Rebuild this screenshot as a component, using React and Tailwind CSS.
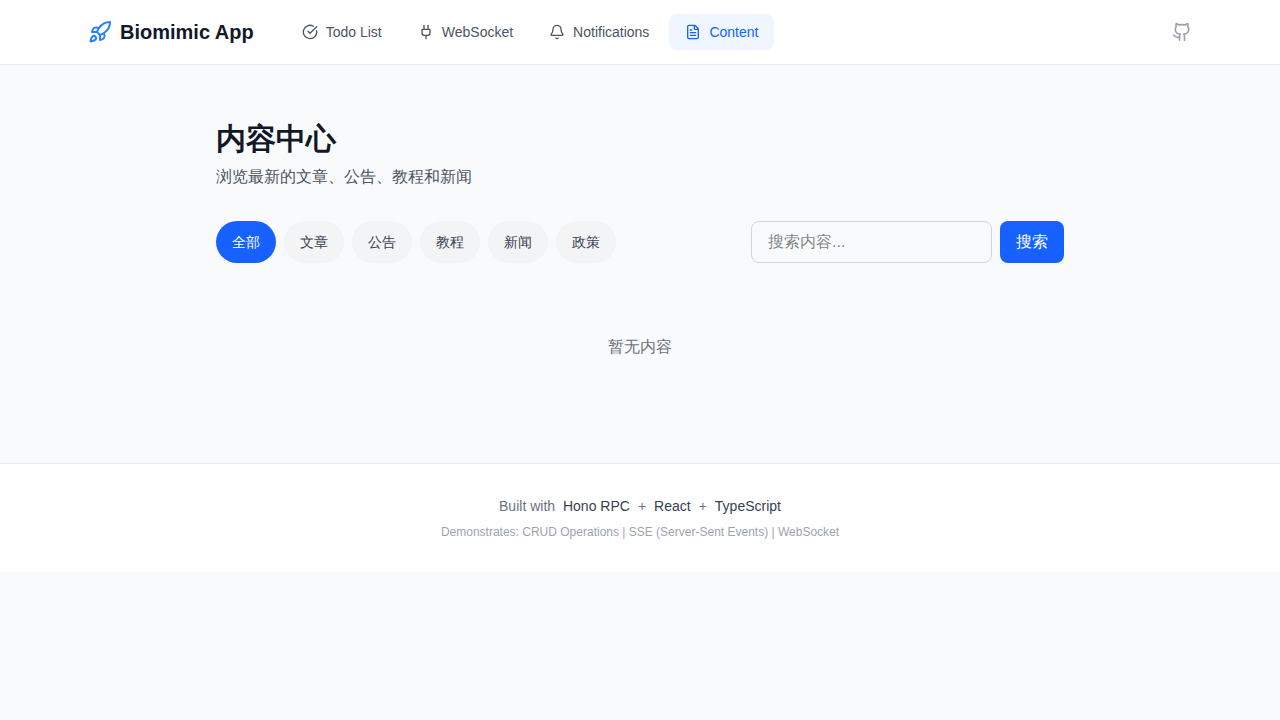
import { Rocket, CircleCheckBig, Plug, Bell, FileText, Github } from 'lucide-react'

const links = [
  { label: 'Todo List', icon: CircleCheckBig },
  { label: 'WebSocket', icon: Plug },
  { label: 'Notifications', icon: Bell },
  { label: 'Content', icon: FileText, active: true },
]

const categorias = ['全部', '文章', '公告', '教程', '新闻', '政策']

const fonte = 'font-["Liberation_Sans",sans-serif]'

export default function App() {
  return (
    <div className={`min-h-[720px] bg-[#f9fafb] ${fonte}`}>
      <header className="h-[65px] bg-white border-b border-[#e5e7eb] px-[88px] flex items-center justify-between">
        <div className="flex items-center">
          <div className="flex items-center gap-2 mr-8">
            <Rocket size={24} className="text-[#2b7fff]" />
            <span className="text-xl font-bold text-[#111827]">Biomimic App</span>
          </div>
          <nav className="flex items-center gap-1">
            {links.map(({ label, icon: Icon, active }) => (
              <a
                key={label}
                className={`flex items-center gap-2 h-9 px-4 rounded-lg text-sm ${active ? 'bg-[#eff6ff] text-[#1661ff]' : 'text-[#4b5563]'}`}
              >
                <Icon size={16} />
                {label}
              </a>
            ))}
          </nav>
        </div>
        <Github size={20} className="text-[#9ca3af]" />
      </header>

      <main className="max-w-4xl mx-auto px-6 pt-[56px] pb-[96px] h-[398px]">
        <h1 className="text-3xl font-bold text-[#111827] leading-[36px] mb-2">内容中心</h1>
        <p className="text-base leading-6 text-[#4b5563] mb-8">浏览最新的文章、公告、教程和新闻</p>

        <div className="flex items-center justify-between">
          <div className="flex gap-2">
            {categorias.map((c, i) => (
              <button
                key={c}
                className={`w-[60px] h-[42px] rounded-full text-sm ${i === 0 ? 'bg-[#1661ff] text-white' : 'bg-[#f3f4f6] text-[#374151]'}`}
              >
                {c}
              </button>
            ))}
          </div>
          <div className="flex gap-2">
            <input
              placeholder="搜索内容..."
              className="w-[241px] h-[42px] px-4 rounded-lg border border-[#d1d5db] text-base outline-none"
            />
            <button className="w-16 h-[42px] rounded-lg bg-[#1661ff] text-white text-base">搜索</button>
          </div>
        </div>

        <p className="mt-[72px] text-center text-base leading-6 text-[#6b7280]">暂无内容</p>
      </main>

      <footer className="h-[109px] bg-white border-t border-[#e5e7eb] pt-8 text-center">
        <p className="text-sm leading-5 text-[#6b7280]">
          Built with <span className="text-[#374151] ml-1">Hono RPC</span>
          <span className="mx-2">+</span>
          <span className="text-[#374151]">React</span>
          <span className="mx-2">+</span>
          <span className="text-[#374151]">TypeScript</span>
        </p>
        <p className="mt-2 text-xs leading-4 text-[#9ca3af]">
          Demonstrates: CRUD Operations | SSE (Server-Sent Events) | WebSocket
        </p>
      </footer>
    </div>
  )
}
